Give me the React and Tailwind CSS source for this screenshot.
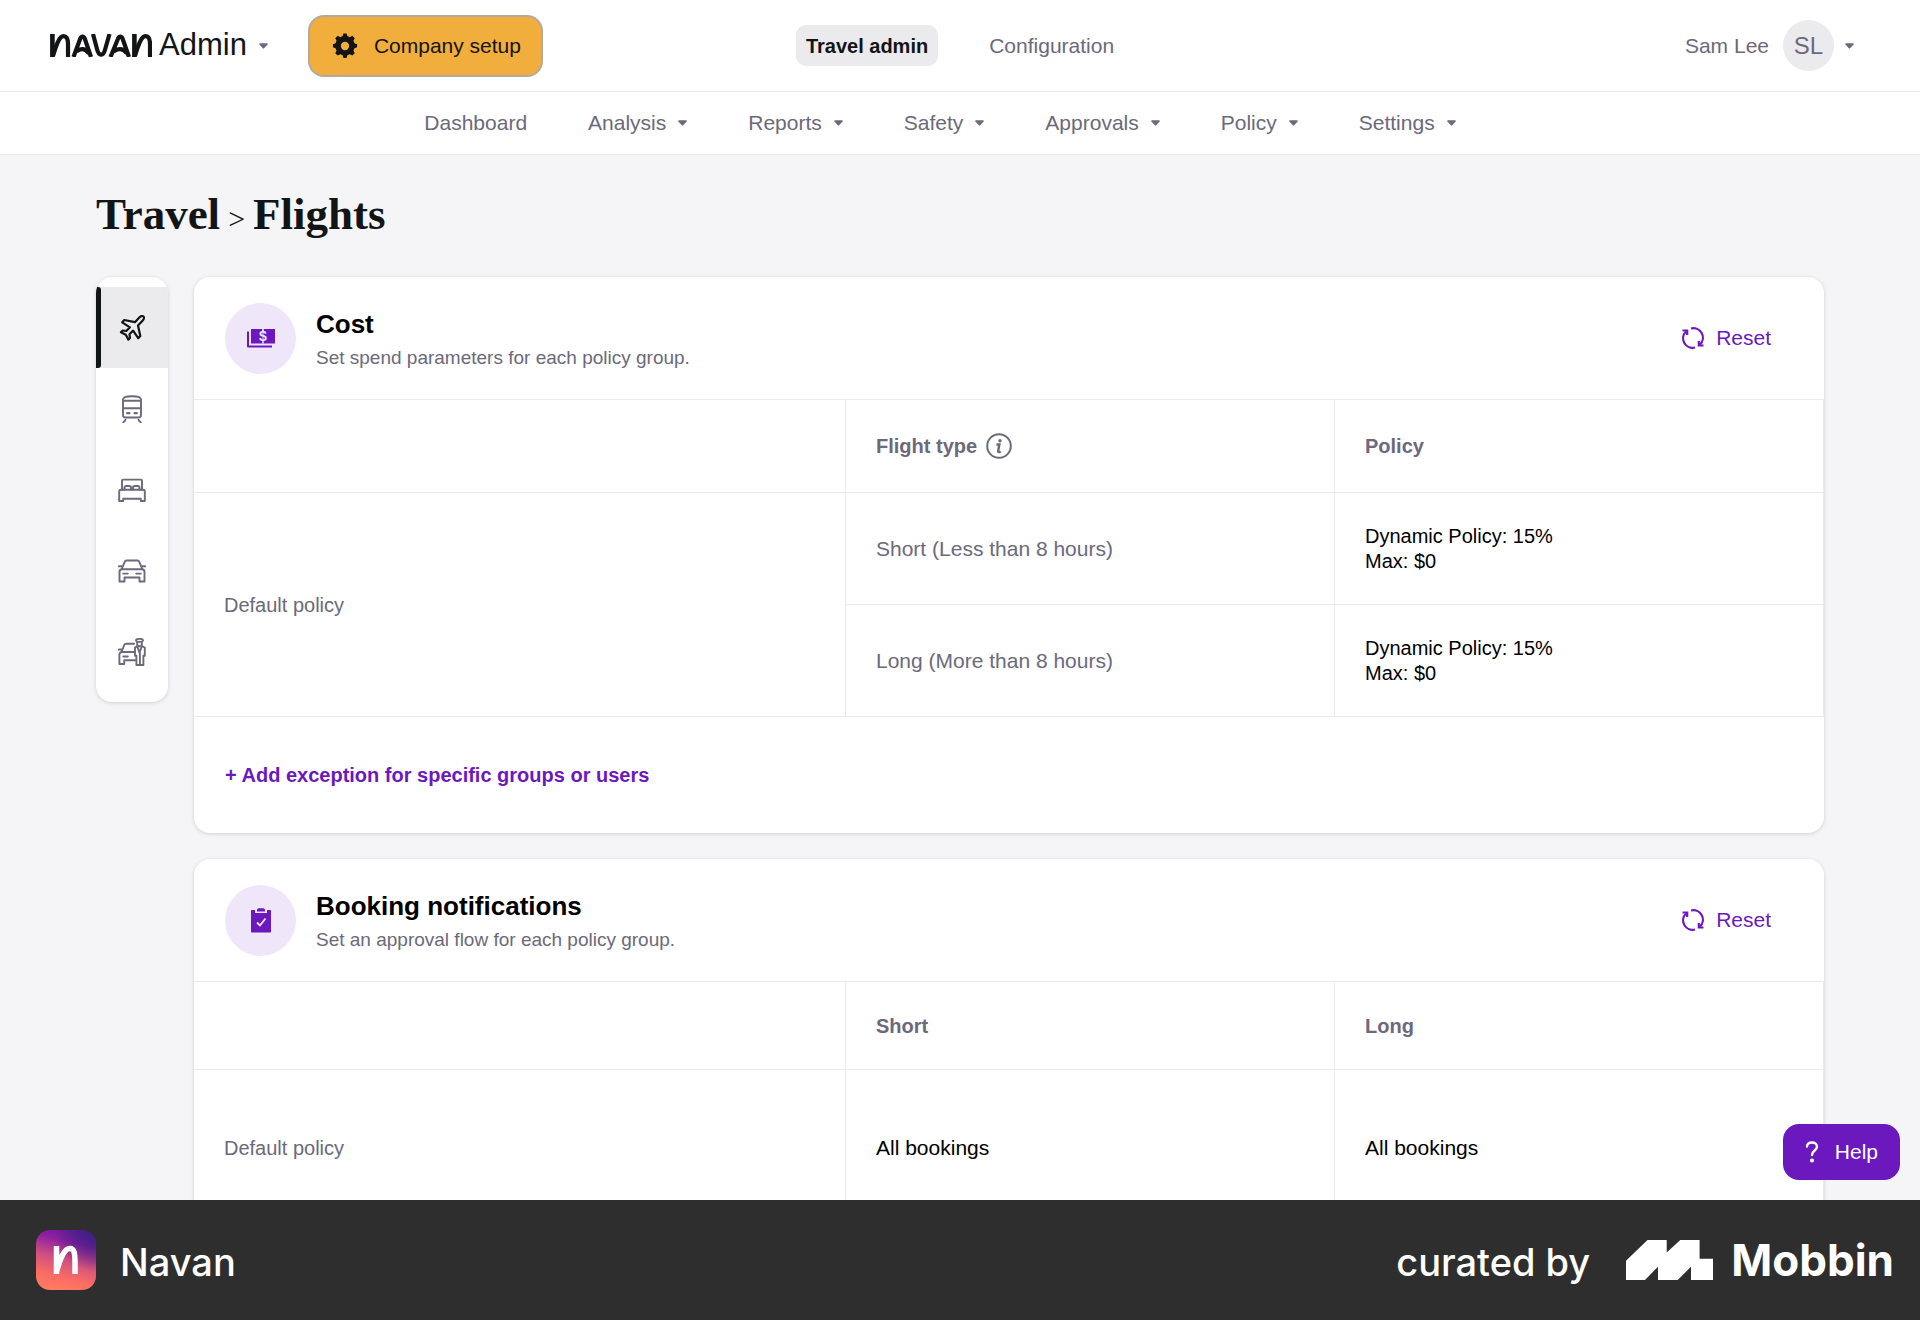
import React from "react";

const Caret = ({ className = "" }) => (
  <svg viewBox="0 0 10 6" className={"h-[6px] w-[9px] " + className} fill="currentColor" aria-hidden="true">
    <path d="M1 0h8a.8.8 0 0 1 .6 1.3L5.700 5.600a1 1 0 0 1-1.400 0L.4 1.300A.8.8 0 0 1 1 0z" />
  </svg>
);

const Gear = () => (
  <svg viewBox="2 1.200 20 20" className="size-[26px]" fill="currentColor" aria-hidden="true">
    <path
      fillRule="evenodd"
      d="M10.2 3.6 10.8 1.6h2.4l.6 2 1.9.8 1.9-1 1.9 1.9-1 1.9.8 1.9 2 .7v2.4l-2 .7-.8 1.9 1 1.9-1.9 1.9-1.9-1-1.9.8-.6 2h-2.4l-.6-2-1.9-.8-1.9 1-1.9-1.9 1-1.9-.8-1.9-2-.7V9.800l2-.7.8-1.900-1-1.900 1.900-1.900 1.900 1zM12 8a3.200 3.200 0 1 0 0 6.400A3.200 3.200 0 0 0 12 8z"
    />
  </svg>
);

const NavanWordmark = () => (
  <svg viewBox="0 0 102 23" className="h-[23px] w-[102px]" fill="none" stroke="#131415" strokeWidth="4.200" aria-hidden="true">
    <path d="M2.400 0v23M84.400 0v23" strokeWidth="4.600" />
    <path d="M3 22C6 12 9 2.200 13.500 2.200c3.800 0 4.500 3.500 4.500 8V23" />
    <path d="M23.500 23 30.200 4.800c1-2.900 3.600-2.900 4.600 0L41 23M26.500 17.500C31 13.500 35 14.500 39 19.500" />
    <path d="M43 0l4 15c1.700 7 6 7.500 7.800 1.500L59.500 0" />
    <path d="M60.500 23 68 4.800c1-2.900 3.600-2.900 4.600 0L79 23M63.500 17.500C68.500 13.500 73 14.500 77 19.500" />
    <path d="M85 22C88 12 91 2.200 95.500 2.200c3.800 0 4.500 3.500 4.500 8V23" />
  </svg>
);

const line = {
  viewBox: "0 0 28 28",
  className: "size-[28px]",
  fill: "none",
  stroke: "currentColor",
  strokeWidth: 1.9,
  strokeLinejoin: "round",
  strokeLinecap: "round",
  "aria-hidden": true,
};

const Plane = () => (
  <svg {...line} strokeWidth="2.200">
    <path d="M25.500 2.500c1 1 .3 2.900-.8 4L20 11.500 22.300 22l-2.100 2.200-5.100-7.600-3.600 3.700.5 3.600-1.700 1.700-2.500-4.900-4.900-2.500 1.700-1.700 3.700.5 3.600-3.700-7.700-5L6.300 6l10.600 2.200 4.700-4.900c1.100-1.100 3-1.700 3.900-.8z" />
  </svg>
);

const Train = () => (
  <svg {...line}>
    <path d="M5 4.500C5 2.200 9 1.200 14 1.200s9 1 9 3.300V20a2.500 2.500 0 0 1-2.500 2.500h-13A2.500 2.500 0 0 1 5 20zM5 5.800h18M5 13.300h18" />
    <path d="M9.200 18.200h2.200M16.600 18.200h2.200" strokeWidth="2.200" />
    <path d="M7.500 24.800 5.200 27.500M20.500 24.800l2.300 2.700" />
  </svg>
);

const Bed = () => (
  <svg {...line}>
    <path d="M4 14V4.800c0-.7.5-1.200 1.200-1.200h17.600c.7 0 1.200.5 1.200 1.200V14" />
    <path d="M6.500 13.500v-1.800c0-1 .8-1.700 1.800-1.700h3c1 0 1.700.7 1.700 1.700v1.800M15 13.500v-1.800c0-1 .8-1.700 1.800-1.700h3c1 0 1.700.7 1.700 1.700v1.800" />
    <path d="M1.200 25V15.600c0-1 .8-1.800 1.800-1.800h22c1 0 1.800.8 1.800 1.800V25h-4v-2.300H5.200V25z" />
  </svg>
);

const Car = () => (
  <svg {...line}>
    <path d="M3.800 12 6.700 4.800C7 4 7.700 3.500 8.500 3.500h11c.8 0 1.500.5 1.800 1.300L24.200 12M.9 9.300h2.600l1 1M27.100 9.300h-2.600l-1 1" />
    <path d="M1.500 24.500v-9.700c0-1.500 1-2.600 2.500-2.600h20c1.500 0 2.500 1.100 2.500 2.600v9.700h-5v-4H6.500v4z" />
    <path d="M5.200 16.600h4.600M18.200 16.600h4.600" />
  </svg>
);

const Driver = () => (
  <svg {...line}>
    <path d="M3.600 13.800 6.200 7c.3-.8 1-1.300 1.900-1.300h7.900M.9 11.500h2.500" />
    <path d="M16 14H4a2.600 2.600 0 0 0-2.600 2.600V26h4.800v-3.700h11M5.300 18.500h4.500" />
    <path d="M18 2.300c0-.8 1.800-1.500 3.500-1.500s3.500.7 3.500 1.500l-.9 1.600h-5.200zM19.200 4v2.500c0 1 1 1.800 2.300 1.800s2.300-.8 2.300-1.800V4" />
    <path d="M19.300 8.200 17 9.500v8.200h1.400V27h7v-9.300h1.400V9.500l-3-1.300-2.300 6.500zM21.900 15v12" />
  </svg>
);

const Money = () => (
  <svg viewBox="0 0 28 19" className="h-[19px] w-[28px]" fill="#6b19bf" aria-hidden="true">
    <path d="M4 0h24v14.500H4zM0 2.500h2v14h23v2H1a1 1 0 0 1-1-1z" />
    <text x="16" y="12.300" textAnchor="middle" fontFamily="Liberation Sans, sans-serif" fontWeight="700" fontSize="14" fill="#f0e6fa">$</text>
    <path d="M15.200 0h1.600v2.500h-1.600zM15.200 12.500h1.600v2h-1.600z" fill="#f0e6fa" />
  </svg>
);

const Clipboard = () => (
  <svg viewBox="0 0 22 25" className="h-[25px] w-[22px]" aria-hidden="true">
    <path d="M2 2h3v3h12V2h3c.6 0 1 .4 1 1v20.500c0 .6-.4 1-1 1H2c-.6 0-1-.4-1-1V3c0-.6.4-1 1-1z" fill="#6b19bf" />
    <path d="M7 3.500V2c0-1 .7-1.700 1.700-1.700h4.600C14.300.3 15 1 15 2v1.500z" fill="#6b19bf" />
    <path d="m7 14.500 3 3 5.500-7" fill="none" stroke="#f0e6fa" strokeWidth="1.800" />
  </svg>
);

const ResetIcon = () => (
  <svg viewBox="0 0 22 22" className="size-[22px]" fill="none" stroke="currentColor" strokeWidth="2.200" aria-hidden="true">
    <path d="M9 1.500A9.500 9.500 0 0 1 18 17.500M13 20.500A9.500 9.500 0 0 1 4 4.500" />
    <path d="M.5 3.500h4.700V8M21.500 18.500h-4.700V14" />
  </svg>
);

const InfoIcon = () => (
  <svg viewBox="0 0 26 26" className="size-[26px]" fill="none" stroke="currentColor" aria-hidden="true">
    <circle cx="13" cy="13" r="11.800" strokeWidth="2" />
    <circle cx="14" cy="7.700" r="1.700" fill="currentColor" stroke="none" />
    <path d="M10.500 11.500h2.900l-1.300 6.500c-.2 1.200.8 1.500 2.600.4" strokeWidth="2.400" />
  </svg>
);

const NAV = ["Dashboard", "Analysis", "Reports", "Safety", "Approvals", "Policy", "Settings"];
const TYPES = [["Flights", Plane], ["Trains", Train], ["Hotels", Bed], ["Cars", Car], ["Car service", Driver]];

const CardHead = ({ icon, title, text }) => (
  <div className="flex h-[122px] items-center pr-[53px] pl-[31px]">
    <div className="flex size-[71px] items-center justify-center rounded-full bg-[#f0e6fa]">{icon}</div>
    <div className="ml-5 flex-1 pt-1">
      <h2 className="text-[26px] leading-8 font-bold text-black">{title}</h2>
      <p className="mt-1 text-[19px] leading-7">{text}</p>
    </div>
    <button className="flex items-center gap-3 text-[21px] text-[#6b19bf]">
      <ResetIcon />
      Reset
    </button>
  </div>
);

const Columns = () => (
  <colgroup>
    <col />
    <col className="w-[489px]" />
    <col className="w-[490px]" />
  </colgroup>
);

const cell = "border-t border-[#ebebee] px-[30px] text-left";
const side = cell + " border-l";
const last = side + " border-r";

export default function App() {
  return (
    <div className="flex h-screen flex-col overflow-hidden bg-[#f5f5f8] font-['Liberation_Sans',Arial,sans-serif] text-[#6b697b]">
      <header className="grid h-[92px] shrink-0 grid-cols-[1fr_auto_1fr] items-center border-b border-[#ebebee] bg-white">
        <div className="flex items-center pl-[50px]">
          <button className="flex items-center text-[31px] text-[#131415]">
            <NavanWordmark />
            <span className="ml-[7px]">Admin</span>
            <Caret className="ml-3 text-[#6b697b]" />
          </button>
          <button className="ml-10 flex h-[62px] items-center gap-4 rounded-2xl border-2 border-[#b5a99c] bg-[#f2ae3d] pr-5 pl-[22px] text-[21px] text-[#131415]">
            <Gear />
            Company setup
          </button>
        </div>
        <div className="flex items-center pr-[10px] text-[21px]">
          <a href="#travel" className="flex h-[41px] items-center rounded-[10px] bg-[#ebebee] px-[10px] text-[20px] font-bold text-[#131415]">Travel admin</a>
          <a href="#configuration" className="ml-[51px]">Configuration</a>
        </div>
        <button className="flex items-center justify-self-end pr-[66px] text-[21px]">
          Sam Lee
          <span className="ml-[14px] flex size-[51px] items-center justify-center rounded-full bg-[#ebebee] text-[24px]">SL</span>
          <Caret className="ml-[11px]" />
        </button>
      </header>

      <nav className="flex h-[63px] shrink-0 items-center justify-center gap-[61px] border-b border-[#ebebee] bg-white pr-[40px] text-[21px]">
        {NAV.map((n, i) =>
          i === 0 ? (
            <a key={n} href="#dashboard">{n}</a>
          ) : (
            <button key={n} className="flex items-center gap-3">
              {n}
              <Caret />
            </button>
          )
        )}
      </nav>

      <main className="min-h-0 flex-1 overflow-hidden px-[96px]">
        <h1 className="mt-[31px] flex h-[56px] items-baseline gap-2 font-['Liberation_Serif',serif] text-[45px] leading-[56px] font-bold text-[#131415]">
          Travel <span className="text-[30px] leading-none font-normal">&gt;</span> Flights
        </h1>
        <div className="mt-[35px] flex items-start gap-[26px]">
          <aside className="flex w-[72px] shrink-0 flex-col overflow-hidden rounded-2xl bg-white py-[10px] shadow-[0_1px_4px_rgba(0,0,0,0.15)]">
            {TYPES.map(([name, Icon], i) => (
              <button
                key={name}
                aria-label={name}
                className={
                  i === 0
                    ? "flex h-[81px] items-center bg-[#ebebee] text-[#131415]"
                    : "flex h-[81px] items-center justify-center"
                }
              >
                {i === 0 && <span className="h-full w-[5px] rounded-r-[3px] bg-[#131415]" />}
                {i === 0 ? <span className="ml-[17px]"><Icon /></span> : <Icon />}
              </button>
            ))}
          </aside>

          <div className="flex min-w-0 flex-1 flex-col gap-[26px]">
            <section className="rounded-2xl bg-white shadow-[0_1px_4px_rgba(0,0,0,0.15)]">
              <CardHead icon={<Money />} title="Cost" text="Set spend parameters for each policy group." />
              <table className="w-full table-fixed border-separate border-spacing-0 text-[21px]">
                <Columns />
                <thead className="text-[20px]">
                  <tr className="h-[93px]">
                    <td className={cell} />
                    <th className={side}>
                      <span className="flex items-center gap-[9px]">Flight type <InfoIcon /></span>
                    </th>
                    <th className={last}>Policy</th>
                  </tr>
                </thead>
                <tbody>
                  <tr className="h-[112px]">
                    <td rowSpan={2} className={cell + " text-[20px]"}>Default policy</td>
                    <td className={side}>Short (Less than 8 hours)</td>
                    <td className={last + " text-[20px] leading-[25px] text-black"}>Dynamic Policy: 15%<br />Max: $0</td>
                  </tr>
                  <tr className="h-[112px]">
                    <td className={side}>Long (More than 8 hours)</td>
                    <td className={last + " text-[20px] leading-[25px] text-black"}>Dynamic Policy: 15%<br />Max: $0</td>
                  </tr>
                </tbody>
              </table>
              <div className="flex h-[117px] items-center border-t border-[#ebebee] px-[31px]">
                <button className="text-[20px] font-bold text-[#6b19bf]">+ Add exception for specific groups or users</button>
              </div>
            </section>

            <section className="rounded-2xl bg-white shadow-[0_1px_4px_rgba(0,0,0,0.15)]">
              <CardHead icon={<Clipboard />} title="Booking notifications" text="Set an approval flow for each policy group." />
              <table className="w-full table-fixed border-separate border-spacing-0 text-[21px]">
                <Columns />
                <thead className="text-[20px]">
                  <tr className="h-[88px]">
                    <td className={cell} />
                    <th className={side}>Short</th>
                    <th className={last}>Long</th>
                  </tr>
                </thead>
                <tbody>
                  <tr className="h-[157px]">
                    <td className={cell + " text-[20px]"}>Default policy</td>
                    <td className={side + " text-black"}>All bookings</td>
                    <td className={last + " text-black"}>All bookings</td>
                  </tr>
                </tbody>
              </table>
            </section>
          </div>
        </div>
      </main>

      <button className="absolute right-5 bottom-[140px] flex h-[56px] items-center gap-4 rounded-2xl bg-[#6b19bf] px-[22px] text-[21px] text-white">
        <svg viewBox="0 0 14 22" className="h-[22px] w-[14px]" fill="none" stroke="currentColor" strokeWidth="2.400" strokeLinecap="round" aria-hidden="true">
          <path d="M2 5.500C2 3 4 1.500 7 1.500s5 1.500 5 4.200c0 3.800-5 3.800-5 8.300" />
          <circle cx="7" cy="19.500" r=".9" fill="currentColor" />
        </svg>
        Help
      </button>

      <footer className="flex h-[120px] shrink-0 items-center bg-[#2e2e2e] pr-[26px] pl-9 font-['Inter',sans-serif] text-white">
        <svg viewBox="0 0 60 60" className="size-[60px]" aria-hidden="true">
          <defs>
            <linearGradient id="tile" x1=".65" y1="0" x2=".4" y2="1">
              <stop offset="0" stopColor="#6f1b9c" />
              <stop offset=".2" stopColor="#8e1fa0" />
              <stop offset=".5" stopColor="#cf4f80" />
              <stop offset=".8" stopColor="#fb6d64" />
              <stop offset="1" stopColor="#ff7a60" />
            </linearGradient>
            <radialGradient id="corner" cx="1" cy="0" r=".7">
              <stop offset="0" stopColor="#35207f" />
              <stop offset="1" stopColor="#35207f" stopOpacity="0" />
            </radialGradient>
          </defs>
          <rect width="60" height="60" rx="14" fill="url(#tile)" />
          <rect width="60" height="60" rx="14" fill="url(#corner)" />
          <path d="M20.500 16v28M20.500 42C24 29 28 18.500 34 18.500c4.500 0 5 6 5 12.500v13" fill="none" stroke="#fff" strokeWidth="5.500" />
        </svg>
        <span className="ml-6 pt-1 text-[38px] font-medium">Navan</span>
        <span className="ml-auto pt-1 text-[38px] font-medium">curated by</span>
        <svg viewBox="0 0 87 40" className="ml-9 h-[40px] w-[87px]" fill="#fff" aria-hidden="true">
          <path d="M0 20.700 21.500 0h19.200v12.500L54.300 0h19.300v18.700H87V40H65V26.700L51.800 40H32V26.700L19 40H0z" />
        </svg>
        <span className="ml-[18px] text-[44px] font-bold">Mobbin</span>
      </footer>
    </div>
  );
}
